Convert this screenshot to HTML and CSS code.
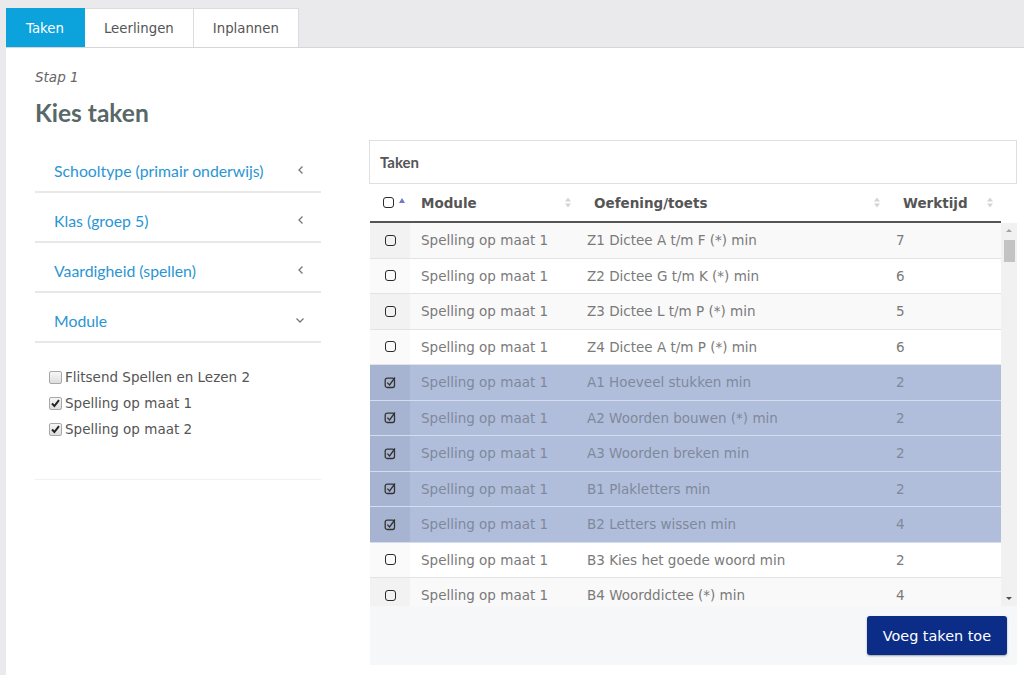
FILE: index.html
```html
<!DOCTYPE html>
<html lang="nl">
<head>
<meta charset="utf-8">
<title>Kies taken</title>
<link rel="stylesheet" href="styles.css">
</head>
<body>
<div class="page">
  <nav class="tabs">
    <a class="tab tab-active">Taken</a>
    <a class="tab">Leerlingen</a>
    <a class="tab">Inplannen</a>
  </nav>
  <main class="panel">
    <p class="step">Stap 1</p>
    <h1 class="title">Kies taken</h1>
    <div class="content">
      <aside class="filters">
        <div class="acc-item"><span>Schooltype (primair onderwijs)</span><svg class="chev" width="8" height="10" viewBox="0 0 8 10"><path d="M5.5 1.5 L2 5 L5.5 8.5" fill="none" stroke="#777" stroke-width="1.3"/></svg></div>
        <div class="acc-item"><span>Klas (groep 5)</span><svg class="chev" width="8" height="10" viewBox="0 0 8 10"><path d="M5.5 1.5 L2 5 L5.5 8.5" fill="none" stroke="#777" stroke-width="1.3"/></svg></div>
        <div class="acc-item"><span>Vaardigheid (spellen)</span><svg class="chev" width="8" height="10" viewBox="0 0 8 10"><path d="M5.5 1.5 L2 5 L5.5 8.5" fill="none" stroke="#777" stroke-width="1.3"/></svg></div>
        <div class="acc-item"><span>Module</span><svg class="chev" width="10" height="8" viewBox="0 0 10 8"><path d="M1.5 2.5 L5 6 L8.5 2.5" fill="none" stroke="#777" stroke-width="1.3"/></svg></div>
        <ul class="module-list">
          <li class="module-item"><span class="cb"></span>Flitsend Spellen en Lezen 2</li>
          <li class="module-item"><span class="cb"><svg width="13" height="13" viewBox="0 0 13 13"><path d="M3 6.5 L5.4 9 L10 3.2" fill="none" stroke="#222" stroke-width="2"/></svg></span>Spelling op maat 1</li>
          <li class="module-item"><span class="cb"><svg width="13" height="13" viewBox="0 0 13 13"><path d="M3 6.5 L5.4 9 L10 3.2" fill="none" stroke="#222" stroke-width="2"/></svg></span>Spelling op maat 2</li>
        </ul>
      </aside>
      <section class="tasks">
        <div class="box-title">Taken</div>
        <div class="tbl">
          <div class="thead">
            <div class="th th-check"><span class="box"></span><svg class="asc" width="6" height="5" viewBox="0 0 6 5"><path d="M0 5 L3 0 L6 5 Z" fill="#7378c8"/></svg></div>
            <div class="th"><span>Module</span><svg class="sort" width="6" height="11" viewBox="0 0 6 11"><path d="M0 4.5 L3 0.5 L6 4.5 Z M0 6.5 L3 10.5 L6 6.5 Z" fill="#d4d4d4"/></svg></div>
            <div class="th"><span>Oefening/toets</span><svg class="sort" width="6" height="11" viewBox="0 0 6 11"><path d="M0 4.5 L3 0.5 L6 4.5 Z M0 6.5 L3 10.5 L6 6.5 Z" fill="#d4d4d4"/></svg></div>
            <div class="th"><span>Werktijd</span><svg class="sort" width="6" height="11" viewBox="0 0 6 11"><path d="M0 4.5 L3 0.5 L6 4.5 Z M0 6.5 L3 10.5 L6 6.5 Z" fill="#d4d4d4"/></svg></div>
          </div>
          <div class="tbody-wrap">
            <div class="tbody">
              <div class="tr"><div class="td td-check"><span class="box"></span></div><div class="td">Spelling op maat 1</div><div class="td">Z1 Dictee A t/m F (*) min</div><div class="td">7</div></div>
              <div class="tr"><div class="td td-check"><span class="box"></span></div><div class="td">Spelling op maat 1</div><div class="td">Z2 Dictee G t/m K (*) min</div><div class="td">6</div></div>
              <div class="tr"><div class="td td-check"><span class="box"></span></div><div class="td">Spelling op maat 1</div><div class="td">Z3 Dictee L t/m P (*) min</div><div class="td">5</div></div>
              <div class="tr"><div class="td td-check"><span class="box"></span></div><div class="td">Spelling op maat 1</div><div class="td">Z4 Dictee A t/m P (*) min</div><div class="td">6</div></div>
              <div class="tr tr-sel"><div class="td td-check"><svg class="boxchk" width="13" height="13" viewBox="0 0 13 13"><rect x="1.2" y="2.2" width="9.3" height="9.3" rx="2" fill="none" stroke="#333" stroke-width="1.3"/><path d="M3.3 6.6 L5.6 9 L11 1.5" fill="none" stroke="#333" stroke-width="1.3"/></svg></div><div class="td">Spelling op maat 1</div><div class="td">A1 Hoeveel stukken min</div><div class="td">2</div></div>
              <div class="tr tr-sel"><div class="td td-check"><svg class="boxchk" width="13" height="13" viewBox="0 0 13 13"><rect x="1.2" y="2.2" width="9.3" height="9.3" rx="2" fill="none" stroke="#333" stroke-width="1.3"/><path d="M3.3 6.6 L5.6 9 L11 1.5" fill="none" stroke="#333" stroke-width="1.3"/></svg></div><div class="td">Spelling op maat 1</div><div class="td">A2 Woorden bouwen (*) min</div><div class="td">2</div></div>
              <div class="tr tr-sel"><div class="td td-check"><svg class="boxchk" width="13" height="13" viewBox="0 0 13 13"><rect x="1.2" y="2.2" width="9.3" height="9.3" rx="2" fill="none" stroke="#333" stroke-width="1.3"/><path d="M3.3 6.6 L5.6 9 L11 1.5" fill="none" stroke="#333" stroke-width="1.3"/></svg></div><div class="td">Spelling op maat 1</div><div class="td">A3 Woorden breken min</div><div class="td">2</div></div>
              <div class="tr tr-sel"><div class="td td-check"><svg class="boxchk" width="13" height="13" viewBox="0 0 13 13"><rect x="1.2" y="2.2" width="9.3" height="9.3" rx="2" fill="none" stroke="#333" stroke-width="1.3"/><path d="M3.3 6.6 L5.6 9 L11 1.5" fill="none" stroke="#333" stroke-width="1.3"/></svg></div><div class="td">Spelling op maat 1</div><div class="td">B1 Plakletters min</div><div class="td">2</div></div>
              <div class="tr tr-sel"><div class="td td-check"><svg class="boxchk" width="13" height="13" viewBox="0 0 13 13"><rect x="1.2" y="2.2" width="9.3" height="9.3" rx="2" fill="none" stroke="#333" stroke-width="1.3"/><path d="M3.3 6.6 L5.6 9 L11 1.5" fill="none" stroke="#333" stroke-width="1.3"/></svg></div><div class="td">Spelling op maat 1</div><div class="td">B2 Letters wissen min</div><div class="td">4</div></div>
              <div class="tr"><div class="td td-check"><span class="box"></span></div><div class="td">Spelling op maat 1</div><div class="td">B3 Kies het goede woord min</div><div class="td">2</div></div>
              <div class="tr"><div class="td td-check"><span class="box"></span></div><div class="td">Spelling op maat 1</div><div class="td">B4 Woorddictee (*) min</div><div class="td">4</div></div>
            </div>
            <div class="scrollbar">
              <svg class="sb-arrow" width="16" height="14" viewBox="0 0 16 14"><path d="M5 9 L8 6 L11 9 Z" fill="#a3a3a3"/></svg>
              <div class="sb-thumb"></div>
              <div class="sb-space"></div>
              <svg class="sb-arrow" width="16" height="14" viewBox="0 0 16 14"><path d="M5 5 L8 8 L11 5 Z" fill="#505050"/></svg>
            </div>
          </div>
          <div class="tfoot">
            <button class="btn-primary" type="button">Voeg taken toe</button>
          </div>
        </div>
      </section>
    </div>
  </main>
</div>
</body>
</html>
```

FILE: styles.css
```css
* { box-sizing: border-box; }

html, body {
  margin: 0;
  padding: 0;
}

body {
  background: #eaeaec;
  font-family: "DejaVu Sans", Verdana, sans-serif;
  overflow: hidden;
}

.page {
  padding-left: 6px;
  height: 675px;
}

.tabs {
  display: flex;
  padding-top: 8px;
  height: 47px;
}

.tab {
  display: flex;
  align-items: center;
  padding: 0 19px;
  background: #fff;
  color: #555;
  font-size: 13.3px;
  border-top: 1px solid #dcdcdc;
  border-right: 1px solid #dcdcdc;
}

.tab-active {
  padding: 0 20px;
  background: #0ca2dc;
  color: #fff;
  border-color: #0ca2dc;
}

.panel {
  background: #fff;
  border-top: 1px solid #d6d6d8;
  padding: 20px 7px 0 29px;
  height: 628px;
}

.step {
  margin: 0;
  font-style: italic;
  font-size: 13.5px;
  line-height: 18px;
  color: #666;
}

.title {
  margin: 12px 0 0;
  font-family: Lato, "Open Sans", sans-serif;
  font-weight: 700;
  font-size: 24.5px;
  line-height: 30px;
  color: #586868;
}

.content {
  display: flex;
  gap: 48px;
  margin-top: 12px;
  align-items: flex-start;
}

/* left filters */
.filters {
  width: 286px;
  margin-top: 3px;
}

.acc-item {
  display: flex;
  align-items: center;
  justify-content: space-between;
  height: 50px;
  padding: 6px 16px 0 19px;
  border-bottom: 2px solid #e8e8e8;
  font-family: Lato, "Open Sans", sans-serif;
  font-size: 15.8px;
  color: #2a95d4;
}

.chev { display: block; }

.module-list {
  list-style: none;
  margin: 0;
  padding: 21px 0 37px 14px;
  border-bottom: 1px solid #f1f1f1;
}

.module-item {
  display: flex;
  align-items: center;
  height: 26px;
  font-size: 13.5px;
  color: #555;
}

.cb {
  width: 13px;
  height: 13px;
  margin-right: 3px;
  border: 1px solid #a8a8a8;
  border-radius: 2px;
  background: linear-gradient(#f6f6f6, #dedede);
  position: relative;
}

.cb svg {
  position: absolute;
  left: -1px;
  top: -1px;
}

/* right task table */
.tasks {
  width: 648px;
}

.box-title {
  height: 44px;
  display: flex;
  align-items: center;
  padding-left: 10px;
  border: 1px solid #dfdfdf;
  font-family: Lato, "Open Sans", sans-serif;
  font-weight: 700;
  font-size: 15px;
  color: #555;
}

.tbl {
  margin-left: 1px;
}

.thead {
  display: grid;
  grid-template-columns: 36px 173px 309px 113px;
  width: 631px;
  height: 39px;
  border-bottom: 2px solid #555;
}

.th {
  display: flex;
  align-items: center;
  justify-content: space-between;
  padding: 0 8px 0 15px;
  font-weight: 700;
  font-size: 13.5px;
  color: #555;
}

.th-check {
  justify-content: flex-start;
  padding-left: 13px;
  padding-right: 0;
}

.asc { margin-left: 5px; margin-top: -4px; }

.box {
  display: block;
  width: 11px;
  height: 11px;
  border: 1.4px solid #2a2a2a;
  border-radius: 3px;
}

.tbody-wrap {
  display: flex;
  height: 383px;
}

.tbody {
  width: 631px;
  overflow: hidden;
}

.tr {
  display: grid;
  grid-template-columns: 40px 167px 308px 116px;
  height: 35.5px;
  border-bottom: 1px solid #e3e3e3;
  background: #fff;
}

.tr:nth-child(odd) { background: #f9f9f9; }

.td {
  display: flex;
  align-items: center;
  padding-left: 10px;
  font-size: 13.5px;
  color: #7a7a7a;
  white-space: nowrap;
}

.td:nth-child(2) { padding-left: 11px; }
.td:nth-child(4) { padding-left: 11px; }

.td-check {
  justify-content: center;
  padding-left: 0;
  background: #f2f2f2;
}

.tr:nth-child(even) .td-check { background: #fafafa; }

.tr.tr-sel {
  background: #b1bedb;
  border-bottom-color: #d4dcee;
}

.tr.tr-sel .td { color: #7f899b; }
.tr.tr-sel .td-check { background: #a7b4d1; }

.boxchk { display: block; margin-left: 1px; }

.scrollbar {
  width: 16px;
  background: #f1f1f1;
  display: flex;
  flex-direction: column;
  align-items: center;
}

.sb-arrow { display: block; flex: none; }

.sb-thumb {
  width: 11px;
  height: 22px;
  margin-top: 3px;
  background: #c3c3c3;
}

.sb-space { flex: 1; }

.tfoot {
  height: 59px;
  background: #f6f7f8;
  display: flex;
  align-items: center;
  justify-content: flex-end;
  padding-right: 10px;
}

.btn-primary {
  height: 39px;
  padding: 0 16px;
  border: none;
  border-radius: 3px;
  background: #0b2d88;
  color: #fff;
  font-family: "DejaVu Sans", Verdana, sans-serif;
  font-size: 14.4px;
  box-shadow: 0 1px 2px rgba(0, 0, 0, 0.35);
}
```
